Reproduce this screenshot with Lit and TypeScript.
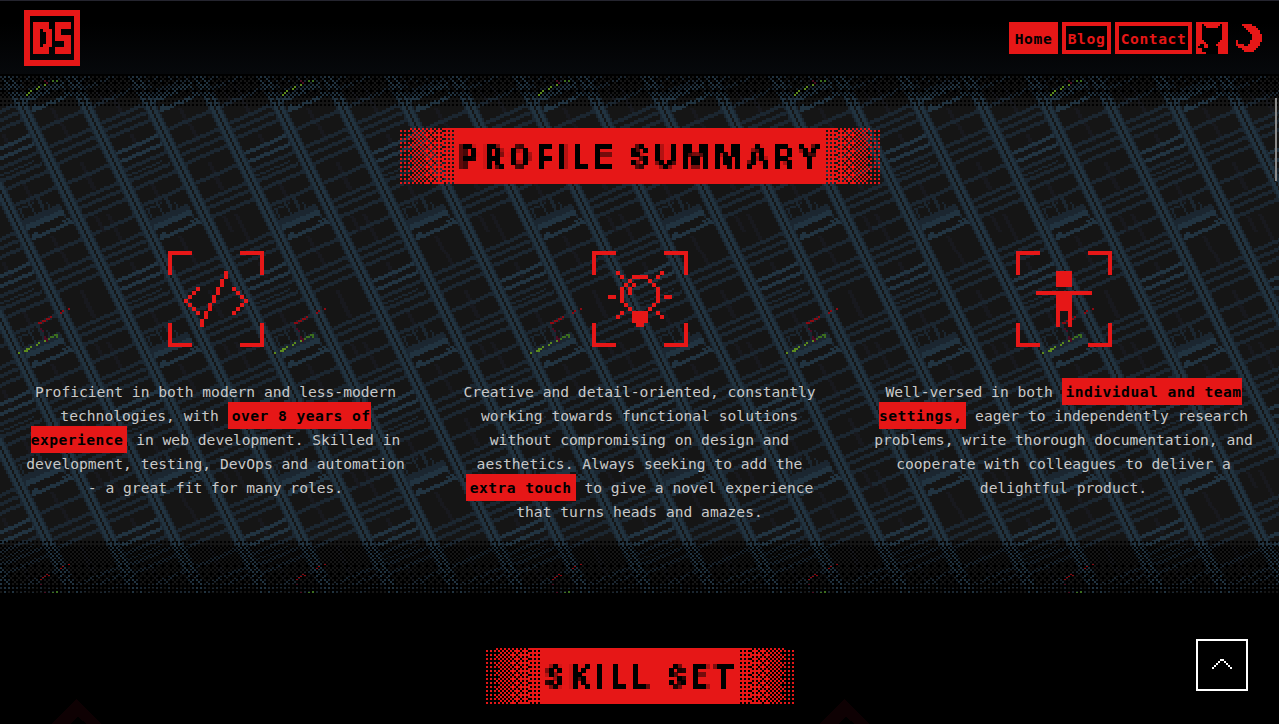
import { LitElement, html, svg, css } from "lit";
import { customElement } from "lit/decorators.js";

const BAYER = [
  [0, 8, 2, 10],
  [12, 4, 14, 6],
  [3, 11, 1, 9],
  [15, 7, 13, 5],
];

/** Path of size-by-size squares for every (col,row) where on() is true. */
function cells(cols: number, rows: number, on: (c: number, r: number) => boolean, s = 2): string {
  let d = "";
  for (let r = 0; r < rows; r++) {
    for (let c = 0; c < cols; c++) {
      if (!on(c, r)) continue;
      let n = 1;
      while (c + n < cols && on(c + n, r)) n++;
      d += `M${c * s} ${r * s}h${n * s}v${s}h${-n * s}z`;
      c += n;
    }
  }
  return d;
}

/* ---- street map tile, 128 x 128 cells ---- */
const N = 128;
const MAP_COLORS = ["#151515", "#18191e", "#1b2630", "#213340", "#8b0a12", "#4a0c22", "#5c8a1e", "#3c6e1e"];
const grid: number[] = new Array(N * N).fill(0);
const mod = (a: number, n: number) => ((a % n) + n) % n;
const put = (x: number, y: number, k: number) => {
  grid[mod(y, N) * N + mod(x, N)] = k;
};
const ux = (X: number) => (X + 24) / 6;
const uy = (Y: number) => (Y + 360) / 6;

type Seg = [number, number, number, number, number, string?];
/* x, y, length, colour, thickness, optional key */
const SEGS: Seg[] = [
  [98, 195, 130, 2, 2, "s1"],
  [124, 247, 135, 2, 2],
  [136, 271, 135, 2, 2],
  [148, 297, 135, 2, 2],
  [176, 358, 135, 2, 2, "s2"],
  [202, 411, 135, 2, 2],
  [212, 434, 135, 2, 2],
  [225, 458, 135, 2, 2],
  [250, 126, 135, 2, 2, "s3"],
  [278, 178, 135, 2, 2],
  [290, 199, 135, 2, 2],
  [302, 221, 135, 2, 2],
  [326, 268, 140, 3, 2],
  [338, 293, 140, 3, 2],
  [350, 318, 135, 2, 2],
  [362, 338, 100, 2, 1],
  [368, 350, 120, 2, 2],
  [380, 375, 125, 2, 2],
  [404, 424, 130, 2, 2],
  [414, 440, 46, 2, 1],
  [428, 472, 112, 2, 2],
  [432, 480, 112, 2, 2],
  [436, 488, 112, 3, 3],
  [450, 526, 145, 3, 2],
  [455, 514, 20, 3, 2],
  [545, 474, 40, 3, 1],
];
const FAINT: number[][] = [
  [128, 140, 8], [156, 186, 9], [214, 300, 13], [230, 334, 8], [296, 70, 8], [312, 105, 8],
  [364, 218, 8], [428, 365, 9], [260, 464, 8],
];
const YARDS: number[][] = [[444, 418, 8], [470, 408, 7], [476, 408, 5], [416, 440, 6], [500, 420, 3], [548, 450, 4]];
const SHIFTS = [[0, 0], [64, 0], [0, 64], [64, 64]];
for (const [sx, sy] of SHIFTS) {
  for (const [X, Y, h] of FAINT) {
    for (let i = 0; i < h; i++) {
      const x = Math.round(ux(X) + i / 2) + sx;
      put(x, Math.round(uy(Y)) + i + sy, 1);
      put(x + 1, Math.round(uy(Y)) + i + sy, 1);
    }
  }
  for (const [X, Y, h] of YARDS) {
    for (let i = 0; i < h; i++) put(Math.round(ux(X) + i / 2) + sx, Math.round(uy(Y)) + i + sy, 2);
  }
  for (const [X, Y, len, k, t, key] of SEGS) {
    if (key === "s1" && sx === 64 && sy === 0) continue;
    if (key === "s2" && sx === 0 && sy === 0) continue;
    if (key === "s3" && sx === 64 && sy === 0) continue;
    const x0 = Math.round(ux(X));
    const n = Math.round(len / 6);
    for (let i = 0; i < n; i++) {
      const y = Math.round(uy(Y) - i * 0.43);
      for (let j = 0; j < t; j++) put(x0 + i + sx, y + j + sy, k);
    }
  }
}
/* avenues */
for (let k = 0; k < 4; k++) {
  for (let y = 0; y < N; y++) {
    const b = Math.floor(y / 2) + k * 32;
    [2, 3, 3, 0, 3, 3, 2].forEach((c, i) => put(b - 1 + i, y, c));
  }
}
const mark = (list: number[][], k: number) => {
  for (const [x, y, n] of list) for (let i = 0; i < n; i++) put(Math.floor(x / 6) + i, Math.floor(y / 6), k);
};
mark([[114, 758, 2], [126, 752, 2], [138, 746, 2], [150, 740, 1], [180, 728, 1], [186, 722, 1], [204, 716, 1]], 4);
mark([[120, 776, 1], [126, 782, 1], [132, 800, 1], [132, 806, 2], [138, 812, 1]], 5);
mark([[54, 848, 1], [72, 842, 2], [78, 836, 2], [90, 830, 1], [108, 824, 1], [114, 818, 1], [132, 812, 1]], 6);
mark([[144, 806, 1], [150, 800, 2], [162, 794, 2], [168, 800, 1]], 7);

const MAP_PATHS = MAP_COLORS.map((_, k) => (k ? cells(N, N, (c, r) => grid[r * N + c] === k) : ""));

const bayer = (c: number, r: number, f: number) => BAYER[r & 3][c & 3] / 16 < f;
const FADE_TOP = cells(8, 16, (c, r) => (r > 11 ? bayer(c, r + 1, 0.25) : bayer(c, r, 0.66 - r * 0.018)));
const FADE_BOTTOM = cells(8, 27, (c, r) => bayer(c, r, r < 3 ? 0.25 : r > 20 ? 0.75 : 0.46 + (r - 3) * 0.008));
const TITLE_EDGE = cells(27, 28, (c, r) => {
  if (c < 4) return c % 2 === 0 && r % 2 === 1;
  if (c > 21) return !(c % 2 === 0 && r % 2 === 1);
  return bayer(c, r + 1, 0.4 + (c - 4) * 0.016);
});

const MOON = [
  "...#####.....", "....######...", ".....######..", "......######.", ".......#####.", "........#####",
  "........#####", "........#####", "#......######", "#......#####.", "####..######.", ".##########..",
  "...#######...", "....#####....",
];
const CAT = [
  "################", "###.########.###", "###..######..###", "###..........###", "###..........###", "###..........###",
  "###..........###", "###..........###", "###..........###", "####........####", "#####......#####", "##..##....######",
  "#...##.....#####", "###........#####", "###........#####", "#####......#####",
];
const bitmap = (rows: string[]) => cells(rows[0].length, rows.length, (c, r) => rows[r][c] === "#");

type Box = [number, number, number, number];
const sq = (pts: number[][]): Box[] => pts.map(([x, y]) => [x, y, 4, 4]);
const CODE: Box[] = [
  ...[0, 1, 2, 3, 4, 5, 6].map((i): Box => [56 - i * 4, 20 + i * 8, 4, 8]),
  ...sq([28, 24, 20, 16, 20, 24, 28].map((x, i) => [x, 36 + i * 4])),
  ...sq([64, 68, 72, 76, 72, 68, 64].map((x, i) => [x, 36 + i * 4])),
];
const BULB: Box[] = [
  ...sq([[24, 20], [28, 24], [68, 20], [64, 24], [28, 60], [24, 64], [64, 60], [68, 64], [36, 28], [56, 28], [32, 32],
    [40, 32], [60, 32], [32, 52], [36, 56], [60, 52], [56, 56]]),
  [16, 44, 8, 4], [72, 44, 8, 4], [40, 24, 16, 4], [36, 36, 4, 8], [28, 36, 4, 16], [64, 36, 4, 16],
  [40, 60, 16, 12], [44, 72, 8, 4],
];
const PERSON: Box[] = [[40, 20, 16, 16], [20, 40, 56, 4], [40, 40, 16, 20], [40, 60, 4, 16], [52, 60, 4, 16]];
const FRAME: Box[] = [
  [0, 0, 24, 4], [0, 0, 4, 24], [72, 0, 24, 4], [92, 0, 4, 24],
  [0, 92, 24, 4], [0, 72, 4, 24], [72, 92, 24, 4], [92, 72, 4, 24],
];
const rects = (list: Box[]) => list.map(([x, y, w, h]) => svg`<rect x=${x} y=${y} width=${w} height=${h}></rect>`);

@customElement("app-root")
export class AppRoot extends LitElement {
  static styles = css`
    :host { display: block; height: 724px; overflow: hidden; background: #000; position: relative;
      font-family: "DejaVu Sans Mono", "Liberation Mono", monospace; color: #c9c9c9; }
    svg { display: block; shape-rendering: crispEdges; fill: #e61717; }
    header { box-sizing: border-box; height: 74px; padding: 9px 17px 0 24px; display: flex; justify-content: space-between;
      align-items: flex-start; background: linear-gradient(#000 30%, #06080b); border-top: 1px solid #24242e; }
    nav { display: flex; gap: 4px; padding-top: 12px; }
    .link { box-sizing: border-box; height: 32px; border: 4px solid #e61717; background: #000; color: #e61717;
      font-weight: 700; font-size: 14.6px; line-height: 25px; letter-spacing: 0.6px; text-align: center; white-space: nowrap; }
    .short { width: 49px; }
    .long { width: 77px; }
    .active { background: #e61717; color: #000; }
    .moon { padding: 2px 0 0 4px; }
    .profile { position: relative; height: 521px; display: flex; flex-direction: column; align-items: center; padding-top: 54px;
      box-sizing: border-box; }
    .map { position: absolute; inset: 0; width: 100%; height: 100%; }
    .title { position: relative; display: flex; height: 56px; }
    .title h2 { margin: 0; background: #e61717; color: #000; font: 700 29px/58px "Inter", sans-serif; white-space: nowrap;
      box-sizing: border-box; padding-left: 5px; overflow: hidden; letter-spacing: 5.6px; }
    .pixel { display: block; height: 56px; padding-left: 1px; filter: url(#mosaic); }
    .wide { width: 372px; }
    .narrow { width: 200px; }
    .flip { transform: scaleX(-1); }
    .cols { position: relative; display: grid; grid-template-columns: repeat(3, 384px); gap: 40px; margin-top: 67px; }
    .card { display: flex; flex-direction: column; align-items: center; }
    .card p { margin: 33px 0 0; font-size: 14.64px; line-height: 24px; text-align: center; white-space: nowrap; }
    mark { background: #e61717; color: #000; font-weight: 700; letter-spacing: 0.46px; padding: 5px 0; }
    .ms { padding-left: 4px; }
    .me { padding-right: 4px; }
    .skills { position: relative; display: flex; justify-content: center; padding-top: 53px; height: 76px; }
    .peaks { position: absolute; left: 0; top: 104px; }
    .up { position: absolute; left: 1196px; top: 639px; width: 48px; height: 48px; border: 2px solid #fff; background: #000;
      display: grid; place-items: center; }
    .up svg { fill: #fff; }
    .thumb { position: absolute; left: 1275px; top: 98px; width: 2px; height: 83px; background: #8a8a8a; }
  `;

  private edge(flip = false) {
    return html`<svg class=${flip ? "flip" : ""} width="54" height="56"><path d=${TITLE_EDGE}></path></svg>`;
  }

  private title(text: string, size: string) {
    return html`<div class="title">${this.edge()}<h2 class=${size}><span class="pixel">${text}</span></h2>${this.edge(true)}</div>`;
  }

  private icon(list: Box[]) {
    return html`<svg width="96" height="96">${rects(FRAME)}${rects(list)}</svg>`;
  }

  render() {
    return html`
      <header>
        <svg width="56" height="56">
          ${rects([
            [0, 0, 56, 6], [0, 50, 56, 6], [0, 6, 6, 44], [50, 6, 6, 44],
            [9, 12, 7, 32], [16, 12, 9, 7], [16, 37, 9, 7], [22, 19, 6, 18], [19, 19, 3, 3], [19, 34, 3, 3],
            [31, 12, 16, 7], [31, 19, 6, 12], [37, 25, 10, 6], [40, 31, 7, 13], [31, 37, 9, 7],
          ])}
        </svg>
        <nav>
          <div class="link short active">Home</div>
          <div class="link short">Blog</div>
          <div class="link long">Contact</div>
          <svg width="32" height="32"><rect width="32" height="32" fill="#000"></rect><path d=${bitmap(CAT)}></path></svg>
          <svg class="moon" width="26" height="28"><path d=${bitmap(MOON)}></path></svg>
        </nav>
      </header>
      <section class="profile">
        <svg class="map">
          <defs>
            <pattern id="streets" y="-4" width="256" height="256" patternUnits="userSpaceOnUse">
              <rect width="256" height="256" fill=${MAP_COLORS[0]}></rect>
              ${MAP_PATHS.map((d, k) => svg`<path d=${d} fill=${MAP_COLORS[k]}></path>`)}
            </pattern>
            <pattern id="fadeTop" width="16" height="521" patternUnits="userSpaceOnUse"><path d=${FADE_TOP} fill="#000"></path></pattern>
            <pattern id="fadeBottom" y="467" width="16" height="54" patternUnits="userSpaceOnUse"><path d=${FADE_BOTTOM} fill="#000"></path></pattern>
            <filter id="mosaic" x="0" y="0" width="1" height="1">
              <feFlood x="2" y="2" width="1" height="1"></feFlood>
              <feComposite width="4" height="4"></feComposite>
              <feTile result="dots"></feTile>
              <feComposite in="SourceGraphic" in2="dots" operator="in"></feComposite>
              <feMorphology operator="dilate" radius="2"></feMorphology>
            </filter>
          </defs>
          <rect width="1279" height="521" fill="url(#streets)"></rect>
          <rect width="1279" height="32" fill="url(#fadeTop)"></rect>
          <rect y="467" width="1279" height="54" fill="url(#fadeBottom)"></rect>
        </svg>
        ${this.title("PROFILE SUMMARY", "wide")}
        <div class="cols">
          <div class="card">
            ${this.icon(CODE)}
            <p>Proficient in both modern and less-modern<br />technologies, with <mark class="ms">over 8 years of</mark><br /><mark
                class="me">experience</mark> in web development. Skilled in<br />development, testing, DevOps and automation<br />- a great fit for many roles.</p>
          </div>
          <div class="card">
            ${this.icon(BULB)}
            <p>Creative and detail-oriented, constantly<br />working towards functional solutions<br />without compromising on design and<br />aesthetics. Always seeking to add the<br /><mark
                class="ms me">extra touch</mark> to give a novel experience<br />that turns heads and amazes.</p>
          </div>
          <div class="card">
            ${this.icon(PERSON)}
            <p>Well-versed in both <mark class="ms">individual and team</mark><br /><mark class="me">settings,</mark> eager to independently research<br />problems, write thorough documentation, and<br />cooperate with colleagues to deliver a<br />delightful product.</p>
          </div>
        </div>
      </section>
      <section class="skills">
        <svg class="peaks" width="1279" height="25">
          <path fill="#0e0103" d="M76 0L101 25H87L78 18L70 25H51ZM844 0L869 25H855L846 18L838 25H819Z"></path>
        </svg>
        ${this.title("SKILL SET", "narrow")}
      </section>
      <div class="up">
        <svg width="20" height="12">${rects([
          [0, 8, 2, 2], [2, 6, 2, 2], [4, 4, 2, 2], [6, 2, 2, 2], [8, 0, 4, 2], [12, 2, 2, 2], [14, 4, 2, 2], [16, 6, 2, 2], [18, 8, 2, 2],
        ])}</svg>
      </div>
      <div class="thumb"></div>
    `;
  }
}
